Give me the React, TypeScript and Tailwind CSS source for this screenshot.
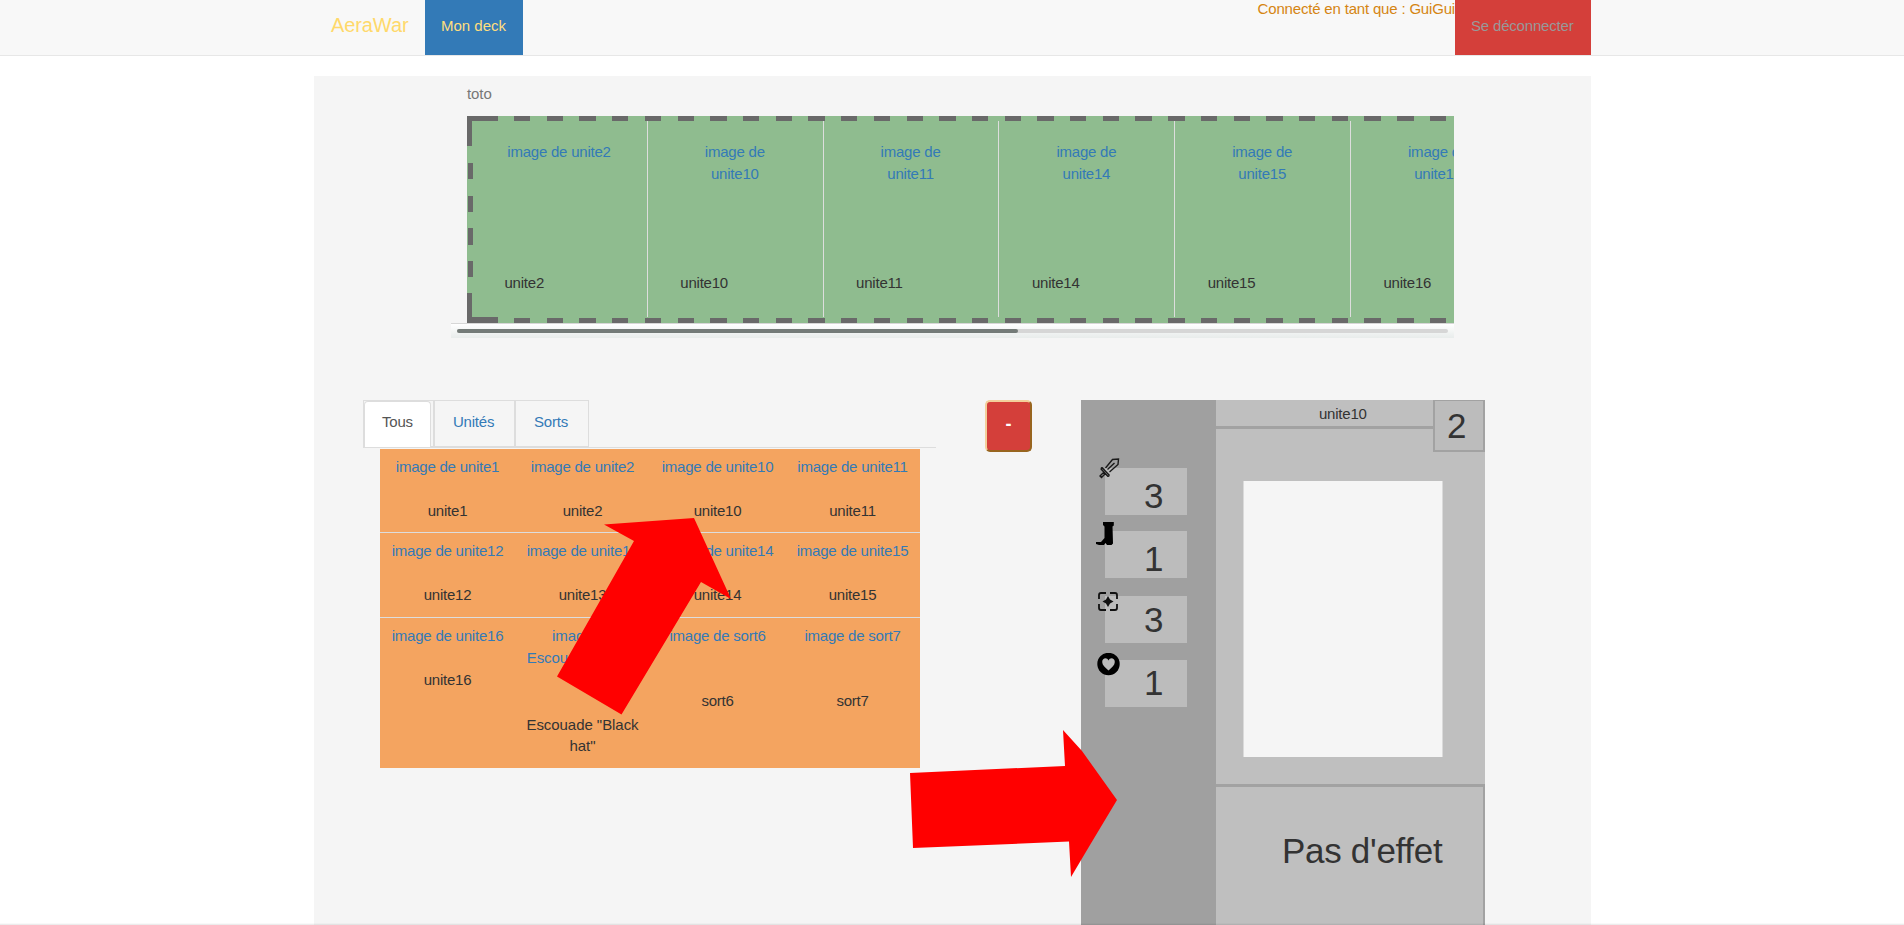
const DASH = '#696969';

const deck = [
  ['image de unite2', 'unite2'],
  ['image de unite10', 'unite10'],
  ['image de unite11', 'unite11'],
  ['image de unite14', 'unite14'],
  ['image de unite15', 'unite15'],
  ['image de unite16', 'unite16'],
];

const rows = [
  { cls: 'h-[84px] border-b', cards: ['unite1', 'unite2', 'unite10', 'unite11'] },
  { cls: 'h-[85px] border-b', cards: ['unite12', 'unite13', 'unite14', 'unite15'] },
];

function Navbar() {
  return (
    <nav className="flex h-14 border-b border-[#e7e7e7] bg-[#f8f8f8] pl-[314px] pr-[313px]">
      <a className="w-[111px] pl-[17px] pt-[15px] text-[20px] leading-[21px] tracking-[-0.1px] text-[#ffd96b]">AeraWar</a>
      <a className="h-[55px] w-[98px] bg-[#337ab7] pl-4 pt-[15px] tracking-normal text-[#ffdf7e]">Mon deck</a>
      <span className="-mt-[2px] ml-auto whitespace-nowrap tracking-[-0.18px] text-[#d58512]">Connecté en tant que : GuiGui</span>
      <a className="h-[55px] w-[136px] bg-[#d43f3a] pl-4 pt-[15px] tracking-[-0.18px] text-[#999]">Se déconnecter</a>
    </nav>
  );
}

function DeckStrip() {
  return (
    <section className="w-[1003px]">
      <div className="relative ml-4 flex h-[207px] overflow-hidden bg-[#8fbc8f] py-[5px] pl-[5px]">
        {deck.map(([image, name], i) => (
          <div
            key={name}
            className="flex h-[196px] w-[175.8px] shrink-0 flex-col justify-between border-r border-[#ddd] pb-[24px] pl-[32.5px] pt-[20px]"
          >
            <a className={i === 0 ? 'block w-[109px] text-center text-[#337ab7]' : 'block w-[109px] px-4 text-center text-[#337ab7]'}>
              {image}
            </a>
            <span>{name}</span>
          </div>
        ))}
        <svg className="pointer-events-none absolute left-0 top-0" width="987" height="207" fill="none" stroke={DASH} strokeWidth="5" shapeRendering="crispEdges">
          <path d="M0 2.5H31M2.5 0V30M2.5 177V207M0 203.5H31" />
          <path d="M0 204H31" strokeWidth="6" />
          <path d="M47 2.5H987M47 204.5H987" strokeDasharray="16.35 16.36" />
          <path d="M3.5 47V165" strokeDasharray="16.3 16.4" />
        </svg>
      </div>
      <div className="h-[15px] border-t border-[#d7d7d7] bg-linear-to-b from-white to-[#e8eceb] px-[6px] pt-[5px]">
        <div className="h-1 rounded-full bg-[#d6d6d6]">
          <div className="h-1 w-[561px] rounded-full bg-[#747b78]" />
        </div>
      </div>
    </section>
  );
}

function Collection() {
  return (
    <section className="w-[573px]">
      <ul className="flex h-12 border-b border-[#ddd]">
        <li className="w-[71px] border border-[#ddd] pr-[2px]">
          <a className="block h-[46px] rounded-t border border-b-0 border-[#ddd] bg-white pl-[17px] pt-[9px] text-[#555]">Tous</a>
        </li>
        <li className="w-[81px] border border-[#ddd] pl-[18px] pt-[10px] text-[#337ab7]">Unités</li>
        <li className="w-[74px] border border-[#ddd] pl-[18px] pt-[10px] text-[#337ab7]">Sorts</li>
      </ul>
      <div className="ml-[17px] mt-px w-[540px] bg-[#f4a460] text-center">
        {rows.map((row) => (
          <div key={row.cards[0]} className={`grid grid-cols-4 border-[#ddd] ${row.cls}`}>
            {row.cards.map((name) => (
              <div key={name} className="pt-[7px]">
                <a className="block text-[#337ab7]">image de {name}</a>
                <span className="mt-[22px] block">{name}</span>
              </div>
            ))}
          </div>
        ))}
        <div className="grid h-[150px] grid-cols-4 pt-[7px]">
          <div>
            <a className="block text-[#337ab7]">image de unite16</a>
            <span className="mt-[22px] block">unite16</span>
          </div>
          <div className="px-2">
            <a className="block tracking-[-0.1px] text-[#337ab7]">image de Escouade "Black hat"</a>
            <span className="mt-[24px] block tracking-[-0.05px]">Escouade "Black hat"</span>
          </div>
          <div>
            <a className="block text-[#337ab7]">image de sort6</a>
            <span className="mt-[43px] block">sort6</span>
          </div>
          <div>
            <a className="block text-[#337ab7]">image de sort7</a>
            <span className="mt-[43px] block">sort7</span>
          </div>
        </div>
      </div>
    </section>
  );
}

function Sword() {
  return (
    <svg className="absolute -left-[7px] -top-[10px]" width="22" height="21" viewBox="0 0 22 21" fill="none" stroke="#1a1a1a" strokeWidth="1.4">
      <path d="M7.500 10L14.500 1.500L20.500 1L20 6.500L11.500 14M9.500 11.500L16.500 5M4 9.500L11.500 17.500M2.800 10.800L10 18.500M4 9.500L2.800 10.800M11.500 17.500L10 18.500M6 14L2 18L3.500 19.500L7.500 15.500" />
    </svg>
  );
}

function Boot() {
  return (
    <svg className="absolute -left-[9px] -top-[9px]" width="19" height="24" viewBox="0 0 19 24">
      <path d="M7 0H17.800V3.500L16.500 4.500L17 21.500L15.500 23H11L9.500 21L8 23H3L0 22V20H5L8.500 16V4.500L7 3Z" fill="#000" />
    </svg>
  );
}

function Target() {
  return (
    <svg className="absolute -left-[7px] -top-[4px]" width="20" height="19" viewBox="0 0 20 19" fill="none" stroke="#111" strokeWidth="1.8">
      <path d="M1 7V3Q1 1 3 1H8M12 1H17Q19 1 19 3V7M19 12V16Q19 18 17 18H12M8 18H3Q1 18 1 16V12" />
      <path d="M10 4L12 7.500L15.500 9.500L12 11.500L10 15L8 11.500L4.500 9.500L8 7.500Z" fill="#111" stroke="none" />
    </svg>
  );
}

function Heart() {
  return (
    <svg className="absolute -left-[8px] -top-[7px]" width="23" height="23" viewBox="0 0 23 23">
      <circle cx="11.500" cy="11" r="11.200" fill="#000" />
      <path d="M11.500 17.500C8 14.500 5.200 12 5.200 9C5.200 5 10 4 11.500 7.500C13 4 17.800 5 17.800 9C17.800 12 15 14.500 11.500 17.500Z" fill="#bbb" />
    </svg>
  );
}

const stats = [
  { value: 3, icon: <Sword />, cls: 'mb-[16px] pt-[7px]' },
  { value: 1, icon: <Boot />, cls: 'mb-[18px] pt-[7px]' },
  { value: 3, icon: <Target />, cls: 'mb-[17px] pt-[3px]' },
  { value: 1, icon: <Heart />, cls: 'pt-[2px]' },
];

function CardPreview() {
  return (
    <section className="flex h-[525px] w-[404px] bg-[#bfbfbf]">
      <div className="w-[135px] bg-[#a0a0a0] pl-6 pt-[68px]">
        {stats.map((s, i) => (
          <div key={i} className={`relative h-[47px] w-[82px] bg-[#bcbcbc] pl-[39px] text-[35px] leading-[42px] ${s.cls}`}>
            {s.icon}
            {s.value}
          </div>
        ))}
      </div>
      <div className="flex w-[269px] flex-col">
        <div className="flex h-[52px] items-start">
          <div className="h-[29px] w-[217px] border-b-[3px] border-[#a2a2a2] pl-[103px] pt-[3px]">unite10</div>
          <div className="h-[52px] w-[52px] border-2 border-t border-[#a2a2a2] bg-[#bcbcbc] pl-[12px] text-[35px] leading-[49px]">2</div>
        </div>
        <div className="ml-[27px] mt-[29px] h-[276px] w-[200px] border-x border-[#dadada] bg-[#f5f5f5]" />
        <div className="mt-[27px] flex-1 border-r-2 border-t-[3px] border-[#a2a2a2] pl-[66px] pt-[43px] text-[35px] leading-[42px] tracking-[-0.3px]">
          Pas d'effet
        </div>
      </div>
    </section>
  );
}

export default function App() {
  return (
    <div className="relative h-[925px] w-[1904px] overflow-hidden bg-white font-['Liberation_Sans',Arial,sans-serif] text-[15px] leading-[21.5px] tracking-[-0.22px] text-[#333]">
      <Navbar />
      <main className="ml-[314px] mt-5 h-[849px] w-[1277px] bg-[#f5f5f5] pt-[7px]">
        <p className="ml-[153px] h-[33px] tracking-[-0.1px] text-[#777]">toto</p>
        <div className="ml-[137px]">
          <DeckStrip />
        </div>
        <div className="mt-[62px] flex items-start pl-[49px]">
          <Collection />
          <button className="ml-[49px] h-[52px] w-[47px] rounded-[5px] border-2 border-b-[#98651f] border-l-[#f3cf9b] border-r-[#98651f] border-t-[#f3cf9b] bg-[#d43f3a] pb-[3px] text-[18px] font-bold text-white">
            -
          </button>
          <div className="ml-[49px]">
            <CardPreview />
          </div>
        </div>
      </main>
      <svg className="pointer-events-none absolute left-0 top-0" width="1904" height="925" fill="#f00">
        <path d="M557 676.500L634 541L604 524.500L694 518L731 599L701 582L621.500 714.500Z" />
        <path d="M910 773L1065 766L1063 730L1082 751L1117 800L1090 845L1071 877L1069 841.500L913 848Z" />
      </svg>
      <div className="absolute bottom-0 left-0 h-[2px] w-full bg-linear-to-b from-transparent to-black/10" />
    </div>
  );
}
